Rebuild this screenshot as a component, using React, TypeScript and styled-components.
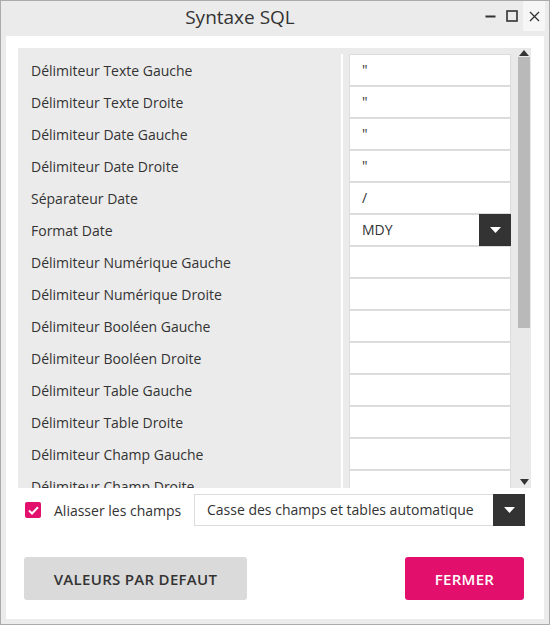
import React, { useState } from 'react';
import styled, { createGlobalStyle } from 'styled-components';

const GlobalStyle = createGlobalStyle`
  html, body {
    margin: 0;
    padding: 0;
    background: #ffffff;
  }
  body {
    font-family: 'Open Sans', 'Noto Sans', 'Liberation Sans', sans-serif;
    color: #333333;
  }
  * {
    box-sizing: border-box;
  }
`;

const Window = styled.div`
  width: 550px;
  height: 625px;
  border: 1px solid #ababab;
  background-color: #ebebeb;
  display: flex;
  flex-direction: column;
`;

const TitleBar = styled.div`
  height: 35px;
  display: flex;
  align-items: flex-start;
`;

const Title = styled.div`
  flex: 1;
  text-align: center;
  font-size: 19px;
  font-weight: 500;
  line-height: 32px;
  color: #333333;
`;

const Controls = styled.div`
  display: flex;
  align-items: flex-start;
  padding-right: 4px;
`;

const ControlButton = styled.div<{ $close?: boolean }>`
  width: 22px;
  height: 30px;
  display: flex;
  align-items: center;
  justify-content: center;
  background-color: ${({ $close }) => ($close ? '#f6f6f6' : 'transparent')};
`;

const Panel = styled.div`
  flex: 1;
  margin: 0 5px 5px 5px;
  background-color: #ffffff;
  padding: 12px 13px 0 12px;
  display: flex;
  flex-direction: column;
`;

const ListArea = styled.div`
  height: 440px;
  background-color: #ebebeb;
  display: flex;
  overflow: hidden;
`;

const Rows = styled.div`
  flex: 1;
  padding-top: 6px;
  overflow: hidden;
`;

const Row = styled.div`
  display: flex;
  height: 32px;
`;

const Label = styled.div`
  width: 325px;
  border-right: 2px solid #ffffff;
  padding-left: 13px;
  padding-top: 1px;
  font-size: 14px;
  line-height: 32px;
  white-space: nowrap;
`;

const ValueCell = styled.div`
  flex: 1;
  padding-left: 6px;
`;

const Input = styled.div`
  position: relative;
  height: 32px;
  background-color: #ffffff;
  border: 1px solid #dcdcdc;
  padding-left: 12px;
  font-size: 14px;
  line-height: 29px;
  color: #333333;
`;

const DropButton = styled.div`
  position: absolute;
  top: -1px;
  right: -1px;
  bottom: -1px;
  width: 32px;
  background-color: #333333;
  display: flex;
  align-items: center;
  justify-content: center;
`;

const ScrollBar = styled.div`
  width: 20px;
  background-color: #e9e9e9;
  display: flex;
  flex-direction: column;
  padding: 1px 1px 2px 7px;
`;

const Arrow = styled.div`
  height: 8px;
  display: flex;
  align-items: center;
  justify-content: center;
`;

const Thumb = styled.div`
  height: 271px;
  background-color: #b9b9b9;
`;

const Spacer = styled.div`
  flex: 1;
`;

const OptionsRow = styled.div`
  display: flex;
  align-items: center;
  height: 32px;
  margin-top: 6px;
  padding-left: 7px;
  padding-right: 6px;
`;

const CheckBox = styled.div`
  width: 16px;
  height: 16px;
  border-radius: 2px;
  background-color: #e2106c;
  display: flex;
  align-items: center;
  justify-content: center;
  flex-shrink: 0;
`;

const CheckLabel = styled.div`
  margin-left: 13px;
  font-size: 14px;
  width: 140px;
  white-space: nowrap;
`;

const Select = styled.div`
  position: relative;
  flex: 1;
  height: 32px;
  border: 1px solid #dcdcdc;
  padding-left: 12px;
  font-size: 14px;
  line-height: 30px;
  white-space: nowrap;
`;

const ButtonsRow = styled.div`
  display: flex;
  justify-content: space-between;
  margin-top: 31px;
  padding: 0 7px 0 6px;
`;

const Button = styled.div<{ $primary?: boolean }>`
  height: 43px;
  width: ${({ $primary }) => ($primary ? '119px' : '223px')};
  border-radius: 3px;
  background-color: ${({ $primary }) => ($primary ? '#e2106c' : '#dadada')};
  color: ${({ $primary }) => ($primary ? '#ffffff' : '#333333')};
  font-size: 15px;
  font-weight: 600;
  display: flex;
  align-items: center;
  justify-content: center;
  letter-spacing: 0.3px;
`;

const TriangleDown = ({ color = '#ffffff', w = 12, h = 7 }: { color?: string; w?: number; h?: number }) => (
  <svg width={w} height={h} viewBox={`0 0 ${w} ${h}`}>
    <polygon points={`0,0 ${w},0 ${w / 2},${h}`} fill={color} />
  </svg>
);

const TriangleUp = ({ color = '#333333', w = 10, h = 6 }: { color?: string; w?: number; h?: number }) => (
  <svg width={w} height={h} viewBox={`0 0 ${w} ${h}`}>
    <polygon points={`0,${h} ${w},${h} ${w / 2},0`} fill={color} />
  </svg>
);

interface Field {
  label: string;
  value: string;
  dropdown?: boolean;
}

const fields: Field[] = [
  { label: 'Délimiteur Texte Gauche', value: '"' },
  { label: 'Délimiteur Texte Droite', value: '"' },
  { label: 'Délimiteur Date Gauche', value: '"' },
  { label: 'Délimiteur Date Droite', value: '"' },
  { label: 'Séparateur Date', value: '/' },
  { label: 'Format Date', value: 'MDY', dropdown: true },
  { label: 'Délimiteur Numérique Gauche', value: '' },
  { label: 'Délimiteur Numérique Droite', value: '' },
  { label: 'Délimiteur Booléen Gauche', value: '' },
  { label: 'Délimiteur Booléen Droite', value: '' },
  { label: 'Délimiteur Table Gauche', value: '' },
  { label: 'Délimiteur Table Droite', value: '' },
  { label: 'Délimiteur Champ Gauche', value: '' },
  { label: 'Délimiteur Champ Droite', value: '' },
];

const App: React.FC = () => {
  const [alias, setAlias] = useState(true);

  return (
    <>
      <GlobalStyle />
      <Window>
        <TitleBar>
          <Title>Syntaxe SQL</Title>
          <Controls>
            <ControlButton>
              <svg width="11" height="11" viewBox="0 0 11 11">
                <rect x="0.5" y="4.5" width="10" height="2" fill="#333333" />
              </svg>
            </ControlButton>
            <ControlButton>
              <svg width="12" height="12" viewBox="0 0 12 12">
                <rect x="1" y="1" width="10" height="10" fill="none" stroke="#333333" strokeWidth="1.6" />
              </svg>
            </ControlButton>
            <ControlButton $close>
              <svg width="11" height="11" viewBox="0 0 11 11">
                <path d="M1 1 L10 10 M10 1 L1 10" stroke="#333333" strokeWidth="1.3" />
              </svg>
            </ControlButton>
          </Controls>
        </TitleBar>
        <Panel>
          <ListArea>
            <Rows>
              {fields.map((f) => (
                <Row key={f.label}>
                  <Label>{f.label}</Label>
                  <ValueCell>
                    <Input>
                      {f.value}
                      {f.dropdown && (
                        <DropButton>
                          <TriangleDown w={11} h={6} />
                        </DropButton>
                      )}
                    </Input>
                  </ValueCell>
                </Row>
              ))}
            </Rows>
            <ScrollBar>
              <Arrow>
                <TriangleUp />
              </Arrow>
              <Thumb />
              <Spacer />
              <Arrow>
                <TriangleDown color="#333333" w={9} h={6} />
              </Arrow>
            </ScrollBar>
          </ListArea>
          <OptionsRow>
            <CheckBox onClick={() => setAlias(!alias)}>
              {alias && (
                <svg width="11" height="9" viewBox="0 0 11 9">
                  <path d="M1 4.5 L4 7.5 L10 1.2" fill="none" stroke="#ffffff" strokeWidth="2" />
                </svg>
              )}
            </CheckBox>
            <CheckLabel>Aliasser les champs</CheckLabel>
            <Select>
              Casse des champs et tables automatique
              <DropButton>
                <TriangleDown w={11} h={6} />
              </DropButton>
            </Select>
          </OptionsRow>
          <ButtonsRow>
            <Button>VALEURS PAR DEFAUT</Button>
            <Button $primary>FERMER</Button>
          </ButtonsRow>
        </Panel>
      </Window>
    </>
  );
};

export default App;
